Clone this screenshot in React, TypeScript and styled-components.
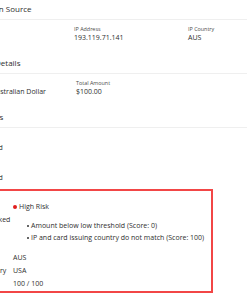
import React from 'react';
import styled, {createGlobalStyle} from 'styled-components';

const GlobalStyle = createGlobalStyle`
  html, body {
    margin: 0;
    padding: 0;
    overflow: hidden;
    background: #fff;
  }
  body {
    font-family: 'Open Sans', 'Liberation Sans', sans-serif;
    color: #333;
  }
`;

const Page = styled.main`
  width: 330px;
  margin-left: -40px;
`;

const SectionTitle = styled.h2`
  margin: 0;
  padding: 3px 0 5px;
  font-size: 8px;
  line-height: 11px;
  font-weight: 400;
  color: #2e2e2e;
  border-bottom: 1px solid #efefef;
`;

const FieldGrid = styled.div<{$columns: string; $inset?: number}>`
  display: grid;
  grid-template-columns: ${({$columns}) => $columns};
  padding: 5px 0 11px ${({$inset}) => $inset ?? 0}px;
`;

const Field = styled.div`
  display: flex;
  flex-direction: column;
  white-space: nowrap;
`;

const FieldLabel = styled.span`
  font-size: 5.4px;
  line-height: 8px;
  color: #4a4a4a;
`;

const FieldValue = styled.span`
  font-size: 7px;
  line-height: 10px;
  color: #2e2e2e;
`;

const CheckBody = styled.div`
  padding-left: 3px;
  color: #2e2e2e;
`;

const CheckList = styled.div`
  display: flex;
  flex-direction: column;
  gap: 4px;
  padding-top: 5px;
`;

const CheckRow = styled.div`
  display: grid;
  grid-template-columns: 50px 1fr;
  padding: 10px 0 6px;
  font-size: 7px;
  line-height: 10px;
  white-space: nowrap;
`;

const RiskBox = styled.div`
  box-sizing: border-box;
  width: 258px;
  margin-left: -8px;
  padding: 9px 0 0 6px;
  border: 2px solid #f24646;
`;

const RiskRow = styled.div`
  display: grid;
  grid-template-columns: 50px 1fr;
  font-size: 7px;
  line-height: 13.3px;
  white-space: nowrap;
`;

const RiskLevel = styled.span`
  display: flex;
  align-items: center;

  &::before {
    content: '';
    width: 4px;
    height: 4px;
    margin-right: 2px;
    border-radius: 50%;
    background: #e01e1e;
  }
`;

const RuleList = styled.ul`
  margin: 6.5px 0 7px;
  padding: 0;
  list-style: none;
`;

const Rule = styled.li`
  display: flex;
  align-items: center;
  padding-left: 13.75px;
  line-height: 12px;

  &::before {
    content: '';
    flex: none;
    width: 2.5px;
    height: 2.5px;
    margin-right: 1.75px;
    border-radius: 50%;
    background: #333;
  }
`;

const rules = [
  'Amount below low threshold (Score: 0)',
  'IP and card issuing country do not match (Score: 100)',
];

const App = () => {
  return (
    <>
      <GlobalStyle />
      <Page>
        <section>
          <SectionTitle>Transaction Source</SectionTitle>
          <FieldGrid $columns="114px 114px 1fr">
            <Field>
              <FieldLabel>Channel</FieldLabel>
              <FieldValue>Web</FieldValue>
            </Field>
            <Field>
              <FieldLabel>IP Address</FieldLabel>
              <FieldValue>193.119.71.141</FieldValue>
            </Field>
            <Field>
              <FieldLabel>IP Country</FieldLabel>
              <FieldValue>AUS</FieldValue>
            </Field>
          </FieldGrid>
        </section>

        <section>
          <SectionTitle>Payment Details</SectionTitle>
          <FieldGrid $columns="105px 1fr" $inset={11}>
            <Field>
              <FieldLabel>Currency</FieldLabel>
              <FieldValue>AUD - Australian Dollar</FieldValue>
            </Field>
            <Field>
              <FieldLabel>Total Amount</FieldLabel>
              <FieldValue>$100.00</FieldValue>
            </Field>
          </FieldGrid>
        </section>

        <section>
          <SectionTitle>Risk Checks</SectionTitle>
          <CheckBody>
            <CheckList>
              <CheckRow>
                <span>CVC Verified</span>
                <span />
              </CheckRow>
              <CheckRow>
                <span>3DS Verified</span>
                <span />
              </CheckRow>
            </CheckList>
            <RiskBox>
              <RiskRow>
                <span>Risk</span>
                <RiskLevel>High Risk</RiskLevel>
              </RiskRow>
              <RiskRow>
                <span>Rules Checked</span>
                <RuleList>
                  {rules.map((rule) => (
                    <Rule key={rule}>{rule}</Rule>
                  ))}
                </RuleList>
              </RiskRow>
              <RiskRow>
                <span>IP Country</span>
                <span>AUS</span>
              </RiskRow>
              <RiskRow>
                <span>Card Country</span>
                <span>USA</span>
              </RiskRow>
              <RiskRow>
                <span>Score</span>
                <span>100 / 100</span>
              </RiskRow>
            </RiskBox>
          </CheckBody>
        </section>
      </Page>
    </>
  );
};

export default App;
